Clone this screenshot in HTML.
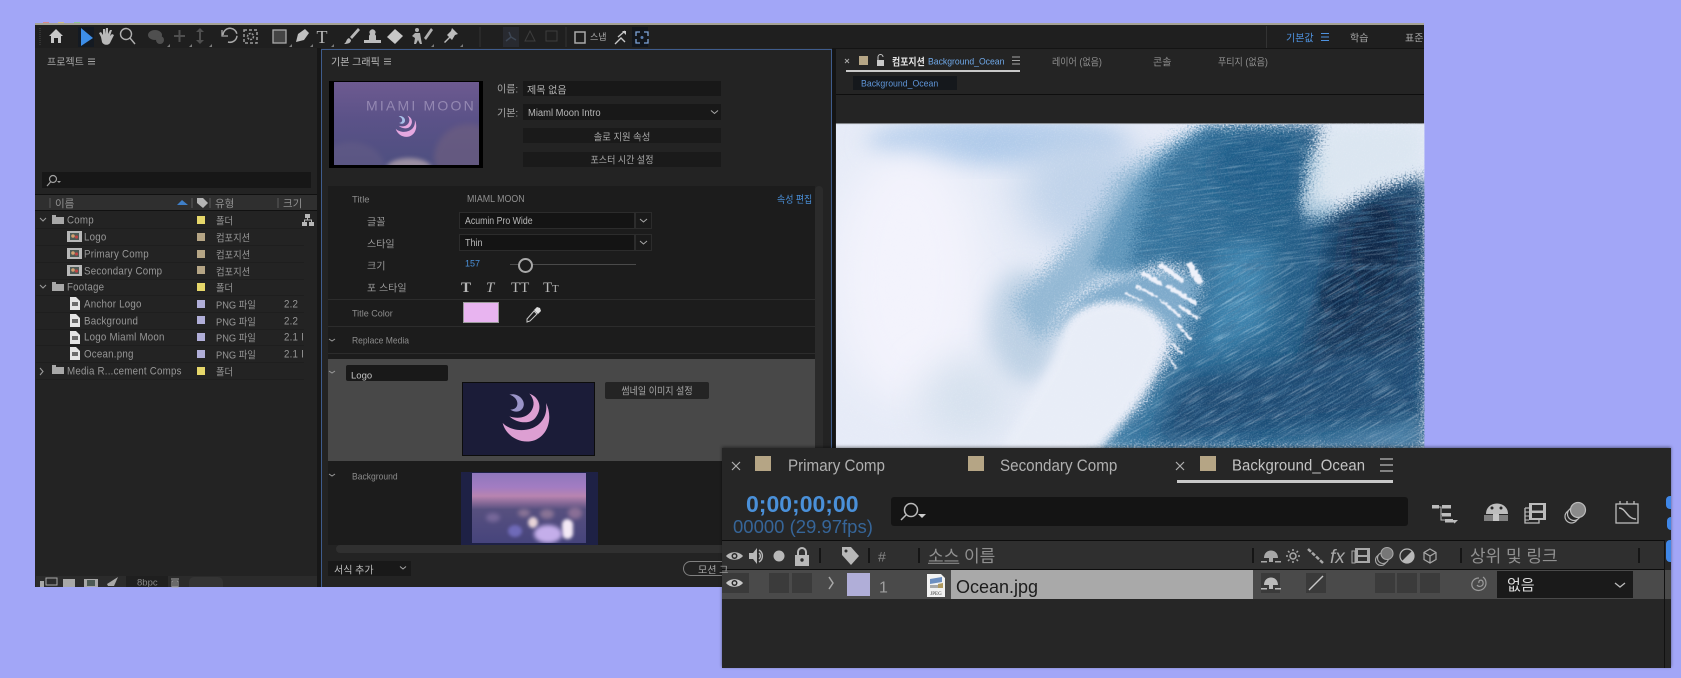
<!DOCTYPE html>
<html lang="ko"><head><meta charset="utf-8"><title>After Effects</title>
<style>
html,body{margin:0;padding:0;width:1681px;height:678px;overflow:hidden;background:#a2a6f7}
body{position:relative;font-family:"Liberation Sans","Noto Sans CJK KR",sans-serif;color:#9c9c9c}
.b{position:absolute;display:block}
.t{position:absolute;white-space:nowrap;transform:translateY(calc(-50% + var(--d,1px))) scaleX(var(--s,1));transform-origin:0 50%;font-style:normal;font-size:10px;line-height:1.2}
.k{--d:2.5px;font-size:10px;color:#a8a8a8}
.r{--s:.885;font-size:11px;letter-spacing:.25px;color:#979797}
.g{--d:2.5px;font-size:10px;color:#a8a8a8}
.y{--d:2.5px;--s:.93;font-size:10px;color:#979797}
.c{transform:translate(-50%,calc(-50% + 2.5px)) scaleX(var(--s,1));transform-origin:50% 50%}
.big{font-size:16.5px;color:#b0b0b0;--s:.92}
</style></head><body>

<!-- main window -->
<div class="b" style="left:35px;top:23px;width:1389px;height:564px;background:#232323"></div>
<div class="b" style="left:35px;top:23px;width:1389px;height:2px;background:#a5a294"></div>
<div class="b" style="left:35px;top:25px;width:1389px;height:23px;background:#1f1f1f"></div>
<div class="b" style="left:43px;top:22px;width:6px;height:1px;background:#d88a8a"></div>
<div class="b" style="left:58px;top:22px;width:6px;height:1px;background:#cfc08a"></div>
<div class="b" style="left:74px;top:22px;width:6px;height:1px;background:#8fc79a"></div>
<div class="b" style="left:78px;top:27px;width:16px;height:20px;background:#141a22"></div>
<div class="b" style="left:632px;top:27px;width:16px;height:20px;background:#12161c"></div>
<div class="b" style="left:503px;top:27px;width:16px;height:20px;background:#282a30"></div>

<!-- project panel -->
<div class="b" style="left:35px;top:48px;width:282px;height:539px;background:#232323"></div>
<div class="b" style="left:317px;top:48px;width:4px;height:539px;background:#171717"></div>
<div class="b" style="left:42px;top:172px;width:269px;height:16px;background:#171717"></div>
<div class="b" style="left:35px;top:194px;width:282px;height:17px;background:#2f2f2f;border-top:1px solid #111;border-bottom:1px solid #111;box-sizing:border-box"></div>
<div class="b" style="left:36px;top:228px;width:268px;height:1px;background:#1e1e1e"></div>
<div class="b" style="left:36px;top:245px;width:268px;height:1px;background:#1e1e1e"></div>
<div class="b" style="left:36px;top:262px;width:268px;height:1px;background:#1e1e1e"></div>
<div class="b" style="left:36px;top:279px;width:268px;height:1px;background:#1e1e1e"></div>
<div class="b" style="left:36px;top:295px;width:268px;height:1px;background:#1e1e1e"></div>
<div class="b" style="left:36px;top:312px;width:268px;height:1px;background:#1e1e1e"></div>
<div class="b" style="left:36px;top:329px;width:268px;height:1px;background:#1e1e1e"></div>
<div class="b" style="left:36px;top:345px;width:268px;height:1px;background:#1e1e1e"></div>
<div class="b" style="left:36px;top:362px;width:268px;height:1px;background:#1e1e1e"></div>
<div class="b" style="left:36px;top:379px;width:268px;height:1px;background:#1e1e1e"></div>
<div class="b" style="left:36px;top:576px;width:281px;height:11px;background:#2b2b2b"></div>
<div class="b" style="left:126px;top:576px;width:42px;height:11px;background:#1f1f1f"></div>
<div class="b" style="left:189px;top:577px;width:34px;height:10px;background:#343434;border-radius:5px 5px 0 0"></div>

<!-- essential graphics panel -->
<div class="b" style="left:321px;top:49px;width:511px;height:538px;background:#232323;border:1px solid #3f5c8c;border-bottom:0;box-sizing:border-box"></div>
<div class="b" style="left:329px;top:81px;width:154px;height:87px;background:#000"></div>
<div class="b" style="left:334px;top:82px;width:145px;height:83px;overflow:hidden;background:linear-gradient(180deg,#6d5a90 0%,#5b5288 45%,#4e4f80 100%)">
<span class="b" style="left:-18px;top:60px;width:70px;height:60px;border-radius:50%;background:#6d6288;opacity:.4;filter:blur(3px)"></span>
<span class="b" style="left:100px;top:42px;width:70px;height:70px;border-radius:50%;background:#6f5f80;opacity:.65;filter:blur(3px)"></span>
<span class="b" style="left:52px;top:76px;width:46px;height:22px;border-radius:50%;background:#9b8fa2;filter:blur(2px)"></span>
<span class="t" style="left:32px;top:24px;font-size:14px;color:#9488b2;letter-spacing:2.2px;--d:0px">MIAMI MOON</span>
<svg class="b" style="left:61px;top:33px" width="22" height="23" viewBox="0 0 150 150"><path fill="#e6a8e0" d="M135 30C155 70 145 125 100 142C60 155 15 130 5 90C25 110 60 118 95 105C125 92 140 65 135 30Z"/><path fill="#e6a8e0" d="M85 2C115 12 125 45 105 72C90 95 50 92 25 70C50 78 75 75 90 55C102 38 100 18 85 2Z"/><path fill="#a8c0e8" d="M25 5C50-2 72 20 68 38C65 55 45 62 28 50C45 50 52 38 48 25C45 15 35 8 25 5Z"/></svg>
</div>
<div class="b" style="left:523px;top:81px;width:198px;height:15px;background:#181818"></div>
<div class="b" style="left:523px;top:104px;width:198px;height:16px;background:#181818"></div>
<div class="b" style="left:523px;top:128px;width:198px;height:15px;background:#1a1a1a"></div>
<div class="b" style="left:523px;top:152px;width:198px;height:15px;background:#1a1a1a"></div>

<div class="b" style="left:328px;top:186px;width:487px;height:359px;background:#1c1c1c"></div>
<div class="b" style="left:815px;top:186px;width:8px;height:359px;background:#2b2b2b;border-radius:4px"></div>
<div class="b" style="left:328px;top:299px;width:487px;height:1px;background:#2c2c2c"></div>
<div class="b" style="left:328px;top:326px;width:487px;height:1px;background:#2c2c2c"></div>
<div class="b" style="left:328px;top:353px;width:487px;height:1px;background:#2c2c2c"></div>
<div class="b" style="left:459px;top:212px;width:176px;height:17px;background:#141414;border:1px solid #2c2c2c;box-sizing:border-box"></div>
<div class="b" style="left:635px;top:212px;width:17px;height:17px;background:#1a1a1a;border:1px solid #2c2c2c;box-sizing:border-box"></div>
<div class="b" style="left:459px;top:234px;width:176px;height:17px;background:#141414;border:1px solid #2c2c2c;box-sizing:border-box"></div>
<div class="b" style="left:635px;top:234px;width:17px;height:17px;background:#1a1a1a;border:1px solid #2c2c2c;box-sizing:border-box"></div>
<div class="b" style="left:510px;top:264px;width:126px;height:1px;background:#4a4a4a"></div>
<div class="b" style="left:518px;top:258px;width:11px;height:11px;border:2px solid #a8a8a8;border-radius:50%;background:#1c1c1c"></div>
<div class="b" style="left:463px;top:302px;width:36px;height:21px;background:#e8b4f0;border:1px solid #9a9a9a;box-sizing:border-box"></div>

<div class="b" style="left:328px;top:359px;width:487px;height:102px;background:#484848"></div>
<div class="b" style="left:346px;top:365px;width:102px;height:16px;background:#191919;border-radius:2px"></div>
<div class="b" style="left:462px;top:382px;width:133px;height:74px;background:#1b1c38;border:1px solid #0c0c0c;box-sizing:border-box"></div>
<svg class="b" style="left:501px;top:393px" width="50" height="50" viewBox="0 0 150 150"><path fill="#dd9fd2" d="M135 30C155 70 145 125 100 142C60 155 15 130 5 90C25 110 60 118 95 105C125 92 140 65 135 30Z"/><path fill="#dd9fd2" d="M85 2C115 12 125 45 105 72C90 95 50 92 25 70C50 78 75 75 90 55C102 38 100 18 85 2Z"/><path fill="#9a94c8" d="M25 5C50-2 72 20 68 38C65 55 45 62 28 50C45 50 52 38 48 25C45 15 35 8 25 5Z"/></svg>
<div class="b" style="left:605px;top:382px;width:104px;height:17px;background:#242424;border-radius:2px"></div>

<div class="b" style="left:461px;top:472px;width:137px;height:73px;background:#1e2145"></div>
<div class="b" style="left:472px;top:473px;width:114px;height:70px;overflow:hidden;background:linear-gradient(180deg,#8f78bc 0%,#a27cc2 20%,#b884b0 33%,#57507f 52%,#46447c 100%)">
<span class="b" style="left:56px;top:44px;width:10px;height:11px;border-radius:50%;background:#e8d4d8;filter:blur(1.5px)"></span>
<span class="b" style="left:90px;top:46px;width:11px;height:20px;border-radius:6px;background:#f4eaf6;filter:blur(1.5px)"></span>
<span class="b" style="left:62px;top:52px;width:28px;height:18px;border-radius:50%;background:#c4aeea;filter:blur(2px)"></span>
<span class="b" style="left:36px;top:52px;width:14px;height:12px;border-radius:50%;background:#6f6ab8;filter:blur(1.5px)"></span>
<span class="b" style="left:14px;top:40px;width:14px;height:9px;border-radius:50%;background:#77689a;filter:blur(2px)"></span>
<span class="b" style="left:68px;top:36px;width:14px;height:10px;border-radius:50%;background:#8a7496;filter:blur(2px)"></span>
<span class="b" style="left:46px;top:36px;width:12px;height:8px;border-radius:50%;background:#8a7496;filter:blur(2px)"></span>
<span class="b" style="left:96px;top:34px;width:14px;height:12px;border-radius:50%;background:#8a6f96;filter:blur(2px)"></span>
</div>
<div class="b" style="left:336px;top:545px;width:490px;height:8px;background:#303030;border-radius:4px"></div>
<div class="b" style="left:328px;top:561px;width:83px;height:15px;background:#191919"></div>
<div class="b" style="left:683px;top:561px;width:60px;height:15px;border:1px solid #808080;border-radius:8px;box-sizing:border-box"></div>

<!-- composition panel -->
<div class="b" style="left:836px;top:48px;width:588px;height:75px;background:#242424"></div>
<div class="b" style="left:832px;top:48px;width:4px;height:539px;background:#141414"></div>
<div class="b" style="left:853px;top:76px;width:104px;height:14px;background:#15181c"></div>
<div class="b" style="left:846px;top:70px;width:174px;height:1.5px;background:#c9c9c9"></div>
<div class="b" style="left:836px;top:94px;width:588px;height:1px;background:#0e0e0e"></div>
<div class="b" style="left:1266px;top:26px;width:1px;height:22px;background:#333"></div>
<div class="b" style="left:836px;top:48px;width:588px;height:1px;background:#141414"></div>

<!-- wave image -->
<svg class="b" style="left:830px;top:10px" width="610" height="440" viewBox="0 0 1568 1320" preserveAspectRatio="none">
<defs>
<clipPath id="cw"><rect x="15" y="340" width="1513" height="980"/></clipPath>
<filter id="bl12" x="-20%" y="-20%" width="140%" height="140%"><feGaussianBlur stdDeviation="12"/></filter>
<filter id="bl30" x="-30%" y="-30%" width="160%" height="160%"><feGaussianBlur stdDeviation="30"/></filter>
<filter id="bl60" x="-40%" y="-40%" width="180%" height="180%"><feGaussianBlur stdDeviation="55"/></filter>
<filter id="sc" x="-10%" y="-10%" width="120%" height="120%"><feGaussianBlur stdDeviation="12" result="s"/><feTurbulence type="fractalNoise" baseFrequency=".2" numOctaves="2" seed="7"/><feDisplacementMap in="s" scale="60" xChannelSelector="R" yChannelSelector="G"/></filter>
<filter id="sc3" x="-10%" y="-10%" width="120%" height="120%"><feGaussianBlur stdDeviation="18" result="s"/><feTurbulence type="fractalNoise" baseFrequency=".22" numOctaves="2" seed="15"/><feDisplacementMap in="s" scale="85" xChannelSelector="R" yChannelSelector="G"/></filter>
<filter id="sc2" x="-10%" y="-10%" width="120%" height="120%"><feTurbulence type="fractalNoise" baseFrequency=".12" numOctaves="2" seed="9"/><feDisplacementMap in="SourceGraphic" scale="14" xChannelSelector="R" yChannelSelector="G"/><feGaussianBlur stdDeviation="1.2"/></filter>
<filter id="sw" x="0" y="0" width="100%" height="100%"><feTurbulence type="fractalNoise" baseFrequency=".012 .2" numOctaves="3" seed="4"/><feColorMatrix values="0 0 0 0 .82  0 0 0 0 .92  0 0 0 0 1  3.2 0 0 0 -1.7"/></filter>
<filter id="sd" x="0" y="0" width="100%" height="100%"><feTurbulence type="fractalNoise" baseFrequency=".014 .17" numOctaves="3" seed="11"/><feColorMatrix values="0 0 0 0 .05  0 0 0 0 .17  0 0 0 0 .32  3.2 0 0 0 -1.5"/></filter>
<filter id="sp" x="0" y="0" width="100%" height="100%"><feTurbulence type="fractalNoise" baseFrequency=".33" numOctaves="2" seed="3"/><feColorMatrix values="0 0 0 0 .93  0 0 0 0 .95  0 0 0 0 1  3.5 0 0 0 -1.75"/></filter>
<pattern id="pw1" patternUnits="userSpaceOnUse" width="1500" height="1500" patternTransform="rotate(-34)"><rect width="1500" height="1500" filter="url(#sw)"/></pattern>
<pattern id="pd1" patternUnits="userSpaceOnUse" width="1500" height="1500" patternTransform="rotate(-34)"><rect width="1500" height="1500" filter="url(#sd)"/></pattern>
<pattern id="pw2" patternUnits="userSpaceOnUse" width="1500" height="1500" patternTransform="rotate(-9)"><rect width="1500" height="1500" filter="url(#sw)"/></pattern>
<pattern id="pd2" patternUnits="userSpaceOnUse" width="1500" height="1500" patternTransform="rotate(-9)"><rect width="1500" height="1500" filter="url(#sd)"/></pattern>
<linearGradient id="gb" x1="0" y1="0" x2="1" y2="0"><stop offset="0" stop-color="#3f80aa"/><stop offset=".45" stop-color="#26648f"/><stop offset="1" stop-color="#174a73"/></linearGradient>
<mask id="mb" maskUnits="userSpaceOnUse" x="0" y="0" width="1568" height="1320"><path d="M990 345L1265 345L1240 470L1215 600L1300 610L1400 540L1528 500L1528 1320L660 1320L790 1190L860 1060L930 930L960 800L860 760L770 780L790 650L830 500L880 430Z" fill="#fff" filter="url(#sc3)"/></mask>
</defs>
<g clip-path="url(#cw)">
<rect x="15" y="340" width="1513" height="980" fill="#e6ebf7"/>
<ellipse cx="430" cy="395" rx="330" ry="70" fill="#b0cbea" filter="url(#bl30)"/>
<ellipse cx="660" cy="540" rx="170" ry="170" fill="#c0d3ea" filter="url(#bl60)"/>
<ellipse cx="200" cy="800" rx="190" ry="380" fill="#f3f3fc" filter="url(#bl60)"/>
<ellipse cx="500" cy="950" rx="90" ry="170" fill="#bcd0e4" filter="url(#bl30)"/>
<ellipse cx="350" cy="1170" rx="110" ry="120" fill="#d6e1ee" filter="url(#bl60)"/>
<path d="M960 345L840 420L740 500L690 600L620 700L540 800L470 880L540 1000L600 900L680 820L800 780L900 600L1000 400Z" fill="#93b8d4" filter="url(#sc3)"/>
<path d="M980 345L860 440L780 520L720 640L670 770L760 790L860 720L950 600L1020 400Z" fill="#6499bd" filter="url(#sc)"/>
<path d="M585 950C640 830 760 770 960 790L960 940L885 1010C870 930 800 880 720 880C660 880 610 930 590 985Z" fill="#7eaacb" filter="url(#sc)"/>
<path d="M990 345L1265 345L1240 470L1215 600L1300 610L1400 540L1528 500L1528 1320L660 1320L790 1190L860 1060L930 930L960 800L860 760L770 780L790 650L830 500L880 430Z" fill="url(#gb)" filter="url(#sc3)"/>
<g mask="url(#mb)">
<path d="M1290 620L1430 540L1528 540L1528 1080L1330 1060L1200 1120L1270 820Z" fill="#123658" filter="url(#bl30)"/>
<ellipse cx="1400" cy="720" rx="60" ry="140" fill="#0c2846" filter="url(#bl12)"/>
<ellipse cx="1310" cy="860" rx="50" ry="70" fill="#0d2c4e" filter="url(#bl12)"/>
<ellipse cx="1100" cy="480" rx="110" ry="90" fill="#1f5c88" filter="url(#bl30)"/>
<path d="M900 1110L1528 1000L1528 1200L830 1300Z" fill="#1c4a72" filter="url(#bl30)"/>
<path d="M1120 1320L1528 1230L1528 1320Z" fill="#5b90b5" filter="url(#bl30)"/>
<path d="M1000 700L1130 700L1130 960L960 1040Z" fill="#3f86b0" filter="url(#bl30)"/>
<rect x="15" y="340" width="1513" height="440" fill="url(#pw2)" opacity=".3"/>
<rect x="15" y="340" width="1513" height="440" fill="url(#pd2)" opacity=".6"/>
<rect x="15" y="760" width="1513" height="560" fill="url(#pw1)" opacity=".4"/>
<rect x="15" y="760" width="1513" height="560" fill="url(#pd1)" opacity=".65"/>
</g>
<path d="M1235 430L1300 430L1290 620L1215 630Z" fill="#9dbfd6" filter="url(#sc3)"/>
<path d="M1270 345L1528 345L1528 470L1430 515L1340 560L1235 590L1255 430Z" fill="#dbe6f1" filter="url(#sc3)"/>
<path d="M595 985C600 910 680 870 760 880C840 890 870 960 850 1040C825 1120 770 1220 690 1320L440 1320C480 1220 570 1090 595 985Z" fill="#e8edf7" filter="url(#bl12)"/>
<g fill="none" stroke="#eef1fa" stroke-linecap="round" filter="url(#sc2)">
<path d="M805 790L850 822" stroke-width="12"/><path d="M850 765L905 812" stroke-width="13"/><path d="M925 765L950 815" stroke-width="18"/>
<path d="M870 830L940 880" stroke-width="12"/><path d="M790 830L840 860" stroke-width="8"/><path d="M900 890L945 925" stroke-width="9"/><path d="M850 870L900 920" stroke-width="6"/><path d="M895 945L925 985" stroke-width="7"/><path d="M880 1000L905 1030" stroke-width="5"/><path d="M760 850L800 870" stroke-width="6"/><path d="M870 1040L890 1075" stroke-width="5"/>
</g>
<rect x="15" y="340" width="1513" height="980" filter="url(#sp)" opacity=".2"/>
<rect x="15" y="340" width="1513" height="3" fill="#cfd4dc"/>
</g>
</svg>

<!-- timeline -->
<div class="b" style="left:722px;top:448px;width:949px;height:220px;background:#262626;box-shadow:0 -1px 3px rgba(0,0,0,.45)"></div>
<div class="b" style="left:755px;top:456px;width:16px;height:15px;background:#b5a585"></div>
<div class="b" style="left:968px;top:456px;width:16px;height:15px;background:#b5a585"></div>
<div class="b" style="left:1200px;top:456px;width:16px;height:15px;background:#b5a585"></div>
<div class="b" style="left:1177px;top:480px;width:216px;height:3px;background:#c9c9c9"></div>
<div class="b" style="left:891px;top:497px;width:517px;height:29px;background:#141414;border-radius:3px"></div>
<div class="b" style="left:722px;top:540px;width:942px;height:30px;background:#2f2f2f;border-top:1px solid #0d0d0d;border-bottom:1px solid #0d0d0d;box-sizing:border-box"></div>
<div class="b" style="left:722px;top:570px;width:942px;height:29px;background:#4a4a4a"></div>
<div class="b" style="left:1665px;top:570px;width:6px;height:29px;background:#4a4a4a"></div>
<div class="b" style="left:1664px;top:540px;width:1px;height:128px;background:#111"></div>
<div class="b" style="left:722px;top:573px;width:27px;height:20px;background:#3a3a3a"></div>
<div class="b" style="left:769px;top:573px;width:20px;height:20px;background:#3b3b3b"></div>
<div class="b" style="left:792px;top:573px;width:20px;height:20px;background:#3b3b3b"></div>
<div class="b" style="left:847px;top:573px;width:23px;height:23px;background:#b0aed8"></div>
<div class="b" style="left:951px;top:570px;width:302px;height:29px;background:#a9a9a9"></div>
<div class="b" style="left:1261px;top:573px;width:19px;height:20px;background:#3a3a3a"></div>
<div class="b" style="left:1306px;top:573px;width:20px;height:20px;background:#3a3a3a"></div>
<div class="b" style="left:1375px;top:573px;width:20px;height:20px;background:#3b3b3b"></div>
<div class="b" style="left:1397px;top:573px;width:20px;height:20px;background:#3b3b3b"></div>
<div class="b" style="left:1420px;top:573px;width:20px;height:20px;background:#3b3b3b"></div>
<div class="b" style="left:1497px;top:571px;width:136px;height:27px;background:#1a1a1a"></div>
<div class="b" style="left:1666px;top:496px;width:5px;height:13px;background:#3f87e8;border-radius:4px 0 0 4px"></div>
<div class="b" style="left:1667px;top:517px;width:4px;height:13px;background:#3f87e8;border-radius:4px 0 0 4px"></div>
<div class="b" style="left:1666px;top:540px;width:5px;height:22px;background:#3f87e8;border-radius:4px 0 0 4px"></div>

<!-- icon overlay -->
<svg class="b" style="left:0;top:0" width="1681" height="678" viewBox="0 0 1681 678" fill="none">
<!-- toolbar -->
<g stroke="#333"><path d="M40 28V46" stroke-dasharray="1 1" stroke-width="2"/><path d="M480 27V47M566 27V47"/></g>
<path fill="#c8c8c8" d="M49 36L56 29L63 36H61V43H58V38H54V43H51V36Z"/>
<path fill="#3d8ee8" d="M81 28L93 38L81 46Z"/>
<path fill="#b8b8b8" d="M101 37L99 33L101 32L103 35L103 29H105V34L106 28H108V34L110 30H112L110 36L112 34L114 35L110 43C108 46 103 45 102 42Z"/>
<g stroke="#b0b0b0" stroke-width="1.4"><circle cx="126" cy="34" r="5.5"/><path d="M130 38L135 44"/></g>
<g fill="#4f4f4f"><ellipse cx="155" cy="35" rx="7" ry="5"/><circle cx="160" cy="40" r="4"/><rect x="174" y="35" width="11" height="2"/><rect x="178.500" y="30" width="2" height="12"/><rect x="199" y="29" width="2" height="14"/><path d="M196 32L200 28L204 32ZM196 40L204 40L200 44Z"/></g>
<g stroke="#a8a8a8" stroke-width="1.5"><path d="M223 35A7 7 0 1 1 228 42" stroke-dasharray="20 2"/><path d="M222 30V36H228" stroke-width="1.3"/></g>
<g stroke="#9c9c9c" stroke-width="1.5"><rect x="244" y="30" width="13" height="13" stroke-dasharray="3 2"/><circle cx="250.500" cy="36.500" r="3" stroke-dasharray="2 1"/></g>
<rect x="273" y="30" width="13" height="13" fill="#444" stroke="#aaa" stroke-width="1.3"/>
<path fill="#c0c0c0" d="M296 42L298 34L305 29L309 33L304 40Z"/>
<text x="322" y="43" text-anchor="middle" font-family="Liberation Serif" font-size="18" fill="#b8b8b8">T</text>
<path fill="#b8b8b8" d="M358 28L350 37L352 39L360 30ZM349 38C346 39 347 42 344 44C348 44 351 43 351 40Z"/>
<path fill="#bcbcbc" d="M369 40L369 36C369 35 370 35 370 34A3 3 0 1 1 375 34C375 35 376 35 376 36V40H381V43H364V40Z"/>
<path fill="#c8c8c8" d="M395 29L403 36L395 44L387 37Z"/>
<g fill="#b0b0b0"><circle cx="417" cy="30" r="2"/><path d="M415 33H420L421 39L422 44H420L418 40L416 44H414L415 38L412 36Z"/><path d="M431 28L424 38L426 40L433 30Z"/></g>
<path fill="#bdbdbd" d="M452 28L458 34L455 35L452 40L450 38L445 43L444 42L449 37L447 35L451 31Z"/>
<path d="M509 32L511 37L516 40M511 37L506 41" stroke="#3d4654" stroke-width="1.5"/>
<path d="M530 31L535 41H525Z" stroke="#3d3d3d"/>
<rect x="546" y="31" width="11" height="10" stroke="#3d3d3d"/>
<rect x="575" y="32" width="10" height="11" stroke="#aaa" stroke-width="1.5"/>
<path d="M615 44L621 38L625 42M618 37L625 31" stroke="#c8c8c8" stroke-width="1.4"/><path d="M622 31H626V35Z" fill="#c8c8c8"/>
<g stroke="#7da4d8" stroke-width="1.3"><path d="M636 36V32H640M644 32H648V36M648 39V43H644M640 43H636V39"/></g>
<circle cx="642" cy="37.500" r="1.500" fill="#5a7eb0"/>
<!-- menus -->
<g stroke="#a6a6a6"><path d="M88 59H95M88 61.500H95M88 64H95"/><path d="M384 59H391M384 61.500H391M384 64H391"/><path d="M1012 57H1020M1012 60.500H1020M1012 64H1020"/></g>
<path d="M1321 33.500H1329M1321 37H1329M1321 40.500H1329" stroke="#4f93e0"/>
<path d="M1380 459H1393M1380 465H1393M1380 471H1393" stroke="#bbb" stroke-width="1.300"/>
<!-- close -->
<g stroke="#a8a8a8"><path d="M845 59L849 63M849 59L845 63"/></g>
<g stroke="#b0b0b0" stroke-width="1.2"><path d="M732 462L740 470M740 462L732 470"/><path d="M1176 462L1184 470M1184 462L1176 470"/></g>
<rect x="859" y="56" width="9" height="9" fill="#b5a585"/>
<path fill="#c8c8c8" d="M877 60H884V66H877Z"/><path d="M878 60V57A2.500 2.500 0 0 1 883 57" stroke="#c8c8c8"/>
<!-- project search -->
<g stroke="#a0a0a0" stroke-width="1.2"><circle cx="53" cy="179" r="3.500"/><path d="M50.500 182L47 186"/></g><path d="M57 181H61L59 183Z" fill="#a0a0a0"/>
<!-- project header -->
<g stroke="#5b5b5b"><path d="M50 198V208M192 198V208M210 198V208M278 198V208"/></g>
<path fill="#3f7fc8" d="M177 205L182 200L188 205Z"/>
<path fill="#b5b5b5" d="M197 198H203L208 203L203 208L197 203Z"/>
<!-- tree -->
<path fill="#b8b8b8" d="M305 214H310V218H305ZM302 222H307V226H302ZM309 222H314V226H309Z"/><path d="M307.500 218V220H304.500V222M307.500 220H311.500V222" stroke="#b8b8b8"/>
<!-- chevrons -->
<g stroke="#9a9a9a" stroke-width="1.1"><path d="M40 218L43 221L46 218"/><path d="M40 285L43 288L46 285"/><path d="M40 368L43 371.500L40 375"/></g>
<!-- folders -->
<g fill="#a8a8a8"><path d="M52 217H64V224H52ZM52 215H56V217H52Z"/><path d="M52 284H64V291H52ZM52 282H56V284H52Z"/><path d="M52 367H64V374H52ZM52 365H56V367H52Z"/></g>
<!-- swatches -->
<g fill="#e6d76a"><rect x="197" y="216" width="8" height="8"/><rect x="197" y="283" width="8" height="8"/><rect x="197" y="367" width="8" height="8"/></g>
<g fill="#b5a585"><rect x="197" y="233" width="8" height="8"/><rect x="197" y="250" width="8" height="8"/><rect x="197" y="266" width="8" height="8"/></g>
<g fill="#b0aed8"><rect x="197" y="300" width="8" height="8"/><rect x="197" y="316" width="8" height="8"/><rect x="197" y="333" width="8" height="8"/><rect x="197" y="350" width="8" height="8"/></g>
<!-- comp icons -->
<g><rect x="67" y="231" width="15" height="11" fill="#b8b8b8"/><rect x="70" y="233" width="9" height="7" fill="#4d5a55"/><circle cx="73" cy="236" r="1.800" fill="#d0a070"/><circle cx="76.500" cy="237" r="1.600" fill="#b44"/></g>
<g><rect x="67" y="248" width="15" height="11" fill="#b8b8b8"/><rect x="70" y="250" width="9" height="7" fill="#4d5a55"/><circle cx="73" cy="253" r="1.800" fill="#d0a070"/><circle cx="76.500" cy="254" r="1.600" fill="#b44"/></g>
<g><rect x="67" y="265" width="15" height="11" fill="#b8b8b8"/><rect x="70" y="267" width="9" height="7" fill="#4d5a55"/><circle cx="73" cy="270" r="1.800" fill="#d0a070"/><circle cx="76.500" cy="271" r="1.600" fill="#b44"/></g>
<!-- file icons -->
<g fill="#e4e4e4"><path d="M70 297H76L80 301V310H70Z"/><path d="M70 314H76L80 318V327H70Z"/><path d="M70 331H76L80 335V344H70Z"/><path d="M70 347H76L80 351V360H70Z"/></g>
<g fill="#6a6a6a"><rect x="72" y="302" width="6" height="4"/><rect x="72" y="319" width="6" height="4"/><rect x="72" y="336" width="6" height="4"/><rect x="72" y="352" width="6" height="4"/></g>
<!-- bottom project -->
<g fill="#a8a8a8"><rect x="46" y="578" width="11" height="7" stroke="#a8a8a8" fill="#2b2b2b"/><rect x="40" y="581" width="4" height="6"/><path d="M63 579H75V587H63Z"/><rect x="84" y="579" width="14" height="8"/><path d="M107 584L118 577L114 586H108Z"/></g>
<rect x="87" y="580" width="8" height="6" fill="#4d5a55"/>
<path d="M171 579H179M172 581H178V587H172ZM174 582V587M176 582V587" stroke="#aaa"/>
<!-- graphics chevrons -->
<g stroke="#a8a8a8"><path d="M711 110.500L714.500 113.500L718 110.500"/><path d="M640 219L643.500 222L647 219"/><path d="M640 241L643.500 244L647 241"/><path d="M400 566.500L403 569L406 566.500"/></g>
<g stroke="#9a9a9a"><path d="M329 339L332 341L335 339"/><path d="M329 371L332 373L335 371"/><path d="M329 474L332 476L335 474"/></g>
<!-- eyedropper -->
<path d="M527 319L534 311L537 314L530 321L527 322Z" stroke="#c8c8c8"/><path fill="#ddd" d="M534 310L537 307L540 308L541 311L538 314Z"/>
<!-- style T -->
<g font-family="Liberation Serif" fill="#b8b8b8"><text x="461" y="292" font-size="15" font-weight="bold">T</text><text x="486" y="292" font-size="15" font-style="italic">T</text><text x="511" y="292" font-size="15">TT</text><text x="543" y="292" font-size="15">T</text><text x="552" y="292" font-size="11">T</text></g>
<!-- timeline search icon -->
<g stroke="#bbb" stroke-width="1.500"><circle cx="911" cy="510" r="6.500"/><path d="M906 515L901 520"/></g>
<path d="M918 514H926L922 518Z" fill="#ccc"/>
<!-- eye icons -->
<path d="M726 556C730 551 739 551 743 556C739 561 730 561 726 556Z" fill="#b8b8b8"/><circle cx="734.500" cy="556" r="3" fill="#2a2a2a"/><circle cx="734.500" cy="556" r="1.500" fill="#b8b8b8"/>
<path d="M726 583C730 578 739 578 743 583C739 588 730 588 726 583Z" fill="#c8c8c8"/><circle cx="734.500" cy="583" r="3" fill="#2a2a2a"/><circle cx="734.500" cy="583" r="1.500" fill="#c8c8c8"/>
<path fill="#b8b8b8" d="M749 553H753L757 548V564L753 559H749Z"/><path d="M759 550A7 7 0 0 1 759 562M759 553A4 4 0 0 1 759 559" stroke="#b8b8b8" stroke-width="1.400"/>
<circle cx="779" cy="556" r="5.500" fill="#b8b8b8"/>
<path fill="#b8b8b8" d="M795 555H809V566H795Z"/><path d="M798 555V552A4 4 0 0 1 806 552V555" stroke="#b8b8b8" stroke-width="2"/><circle cx="802" cy="560" r="1.700" fill="#2a2a2a"/>
<g stroke="#0d0d0d" stroke-width="1.500"><path d="M820 548V563M869 548V563M919 548V563M1253 548V563M1461 548V563M1639 548V563"/></g>
<path fill="#b8b8b8" d="M842 547H851L859 556L851 565L842 555Z"/><circle cx="846" cy="551" r="1.500" fill="#2f2f2f"/>
<path d="M829 577L833 583L829 589" stroke="#a8a8a8" stroke-width="1.500"/>
<!-- jpeg file -->
<path fill="#f2f2f2" d="M927 574H941L945 578V597H927Z"/><path fill="#6d8fc0" d="M930 579L942 577V582L930 584Z"/><path fill="#b09a60" d="M938 584L943 583V588H938Z"/><path fill="#777" d="M930 585H938V588H930Z" opacity=".6"/>
<text x="936" y="595" text-anchor="middle" font-family="Liberation Serif" font-size="5" fill="#333">JPEG</text>
<!-- col icons -->
<g fill="#a8a8a8">
<path d="M1264 558C1264 548 1278 548 1278 558H1273V562H1269V558ZM1261 561H1267V562.500H1261ZM1275 561H1281V562.500H1275Z"/>
<path d="M1264 585C1264 575 1278 575 1278 585H1273V589H1269V585ZM1261 588H1267V589.500H1261ZM1275 588H1281V589.500H1275Z" fill="#bbb"/>
</g>
<g stroke="#a8a8a8" stroke-width="1.500"><circle cx="1293" cy="556" r="3"/><path d="M1293 549V551M1293 561V563M1286 556H1288M1298 556H1300M1288 551L1289.500 552.500M1296.500 559.500L1298 561M1298 551L1296.500 552.500M1289.500 559.500L1288 561"/></g>
<path d="M1308 549L1323 563" stroke="#a8a8a8" stroke-width="2.500" stroke-dasharray="4 1.500"/>
<text x="1330" y="563" font-family="Liberation Sans" font-style="italic" font-size="19" fill="#a8a8a8">fx</text>
<rect x="1355" y="548" width="15" height="15" fill="#a8a8a8"/><rect x="1358" y="550" width="9" height="5" fill="#2f2f2f"/><rect x="1358" y="557" width="9" height="4" fill="#2f2f2f"/><rect x="1352" y="551" width="3" height="12" stroke="#a8a8a8"/>
<g stroke="#a8a8a8" stroke-width="1.100"><circle cx="1381" cy="560" r="5.500" fill="#2f2f2f"/><circle cx="1383" cy="558" r="5.500" fill="#2f2f2f"/><circle cx="1387" cy="553.500" r="6" fill="#777"/></g>
<circle cx="1407" cy="556" r="7" stroke="#b8b8b8" stroke-width="1.200"/><path fill="#b8b8b8" d="M1412 551A7 7 0 0 1 1402 561Z"/>
<path d="M1430 549L1436 552.500V559.500L1430 563L1424 559.500V552.500ZM1424 552.500L1430 556L1436 552.500M1430 556V563" stroke="#a8a8a8" stroke-width="1.200"/>
<path d="M1309 590L1323 576" stroke="#c8c8c8" stroke-width="1.400"/>
<path d="M1479 578C1474 578 1471 582 1472 586C1473 590 1479 592 1483 589C1487 586 1487 580 1483 577M1479 583C1478 580 1482 579 1483 582C1484 586 1479 588 1477 585" stroke="#9a9a9a" stroke-width="1.200"/>
<path d="M1615 583L1620 587L1625 583" stroke="#bbb" stroke-width="1.300"/>
<!-- top right timeline icons -->
<g fill="#bcbcbc"><rect x="1432" y="505" width="7" height="3.500"/><rect x="1442" y="505" width="9" height="3.500"/><rect x="1442" y="513" width="9" height="3.500"/><rect x="1445" y="519" width="8" height="3.500"/></g>
<path d="M1439 507H1441V520H1445M1441 514H1443" stroke="#bcbcbc"/>
<path d="M1451 520H1458L1454.500 523.500Z" fill="#bbb"/>
<path fill="#bdbdbd" d="M1486 514C1486 500 1508 500 1508 514H1499V520H1493V514Z"/><circle cx="1492" cy="508" r="1.500" fill="#262626"/><circle cx="1501" cy="508" r="1.500" fill="#262626"/><rect x="1484" y="515" width="9" height="6" fill="#7f7f7f"/><rect x="1499" y="515" width="9" height="6" fill="#7f7f7f"/><rect x="1493" y="514" width="6" height="7" fill="#c4c4c4"/>
<rect x="1529" y="503" width="17" height="17" fill="#bcbcbc"/><rect x="1532" y="505" width="11" height="5.500" fill="#2a2a2a"/><rect x="1532" y="513" width="11" height="5" fill="#2a2a2a"/><path d="M1525 508H1529M1525 508V523H1539V520" stroke="#bcbcbc" stroke-width="1.300"/><path d="M1525 512H1529M1525 516H1529M1525 520H1529" stroke="#bcbcbc"/>
<g stroke="#bbb" stroke-width="1.200"><circle cx="1571.500" cy="516.500" r="6.500" fill="#262626"/><circle cx="1574" cy="514" r="6.500" fill="#262626"/><circle cx="1578" cy="510" r="7.500" fill="#8a8a8a"/></g>
<g stroke="#bcbcbc" stroke-width="1.300"><rect x="1616" y="504" width="22" height="19"/><path d="M1620 504V501M1627 504V501M1634 504V501"/><path d="M1619 508C1626 508 1627 519 1636 519" stroke-width="1.500"/></g>
<!-- small triangles -->
<g fill="#7b7b7b"><path d="M167 47L170 47V44Z"/><path d="M189 47L192 47V44Z"/><path d="M209 47L212 47V44Z"/><path d="M289 47L292 47V44Z"/><path d="M310 47L313 47V44Z"/><path d="M331 47L334 47V44Z"/><path d="M431 47L434 47V44Z"/><path d="M460 47L463 47V44Z"/></g>
</svg>

<!-- text -->
<i class="t k" style="left:47px;top:61px">프로젝트</i>
<i class="t k" style="left:55px;top:202px;color:#909090;font-size:10.5px">이름</i>
<i class="t k" style="left:215px;top:202px;color:#909090;font-size:10.5px">유형</i>
<i class="t k" style="left:283px;top:202px;color:#909090;font-size:10.5px">크기</i>
<i class="t r" style="left:67px;top:220px">Comp</i><i class="t y" style="left:216px;top:220px">폴더</i>
<i class="t r" style="left:84px;top:237px">Logo</i><i class="t y" style="left:216px;top:237px">컴포지션</i>
<i class="t r" style="left:84px;top:254px">Primary Comp</i><i class="t y" style="left:216px;top:254px">컴포지션</i>
<i class="t r" style="left:84px;top:271px">Secondary Comp</i><i class="t y" style="left:216px;top:271px">컴포지션</i>
<i class="t r" style="left:67px;top:287px">Footage</i><i class="t y" style="left:216px;top:287px">폴더</i>
<i class="t r" style="left:84px;top:304px">Anchor Logo</i><i class="t y" style="left:216px;top:304px">PNG 파일</i><i class="t r" style="left:284px;top:304px">2.2</i>
<i class="t r" style="left:84px;top:321px">Background</i><i class="t y" style="left:216px;top:321px">PNG 파일</i><i class="t r" style="left:284px;top:321px">2.2</i>
<i class="t r" style="left:84px;top:337px">Logo Miaml Moon</i><i class="t y" style="left:216px;top:337px">PNG 파일</i><i class="t r" style="left:284px;top:337px">2.1 I</i>
<i class="t r" style="left:84px;top:354px">Ocean.png</i><i class="t y" style="left:216px;top:354px">PNG 파일</i><i class="t r" style="left:284px;top:354px">2.1 I</i>
<i class="t r" style="left:67px;top:371px">Media R...cement Comps</i><i class="t y" style="left:216px;top:371px">폴더</i>
<i class="t" style="left:137px;top:582px;font-size:9.5px;color:#888">8bpc</i>

<i class="t k" style="left:331px;top:61px;color:#bbb">기본 그래픽</i>
<i class="t g" style="left:497px;top:88px">이름:</i>
<i class="t g" style="left:497px;top:112px">기본:</i>
<i class="t g" style="left:527px;top:89px;color:#b4b4b4">제목 없음</i>
<i class="t" style="left:528px;top:113px;color:#b8b8b8;font-size:10px;--s:.94">Miaml Moon Intro</i>
<i class="t g c" style="left:622px;top:136px;--s:.93">솔로 지원 속성</i>
<i class="t g c" style="left:622px;top:159px;--s:.9">포스터 시간 설정</i>
<i class="t" style="left:352px;top:199px;color:#8c8c8c;font-size:9.5px">Title</i>
<i class="t" style="left:467px;top:199px;color:#8f8f8f;font-size:10px;--s:.885">MIAML MOON</i>
<i class="t" style="left:777px;top:199px;color:#4a90d9;font-size:10px;--s:.89;--d:2px">속성 편집</i>
<i class="t g" style="left:367px;top:221px;color:#999">글꼴</i>
<i class="t g" style="left:367px;top:243px;color:#999">스타일</i>
<i class="t g" style="left:367px;top:265px;color:#999">크기</i>
<i class="t g" style="left:367px;top:287px;color:#999">포 스타일</i>
<i class="t" style="left:465px;top:221px;color:#b8b8b8;font-size:10px;--s:.875">Acumin Pro Wide</i>
<i class="t" style="left:465px;top:243px;color:#b8b8b8;font-size:10px;--s:.9">Thin</i>
<i class="t" style="left:465px;top:263px;color:#4a90d9;font-size:9px">157</i>
<i class="t" style="left:352px;top:313px;color:#8c8c8c;font-size:9.5px;--s:.95">Title Color</i>
<i class="t" style="left:352px;top:340px;color:#8c8c8c;font-size:9.5px;--s:.9">Replace Media</i>
<i class="t" style="left:351px;top:375px;color:#c4c4c4;font-size:9.5px">Logo</i>
<i class="t g c" style="left:657px;top:390px;color:#a8a8a8;--s:.9">썸네일 이미지 설정</i>
<i class="t" style="left:352px;top:476px;color:#8c8c8c;font-size:9.5px;--s:.9">Background</i>
<i class="t g" style="left:334px;top:569px;color:#bbb">서식 추가</i>
<i class="t g" style="left:698px;top:569px">모션 그</i>
<i class="t g" style="left:590px;top:35px;font-size:9px">스냅</i>

<i class="t g" style="left:892px;top:61px;color:#e4e4e4;font-weight:bold;--s:.89">컴포지션</i>
<i class="t" style="left:928px;top:61px;color:#6fa8e8;font-size:9.5px;--s:.91">Background_Ocean</i>
<i class="t g" style="left:1052px;top:61px;color:#8f8f8f;--s:.9">레이어 (없음)</i>
<i class="t g" style="left:1153px;top:61px;color:#8f8f8f">콘솔</i>
<i class="t g" style="left:1218px;top:61px;color:#8f8f8f;--s:.9">푸티지 (없음)</i>
<i class="t" style="left:861px;top:83px;color:#5f95d8;font-size:9.5px;--s:.92">Background_Ocean</i>
<i class="t g" style="left:1286px;top:37px;color:#4f93e0">기본값</i>
<i class="t g" style="left:1350px;top:37px;color:#a8a8a8">학습</i>
<i class="t g" style="left:1405px;top:37px;color:#a8a8a8">표준</i>

<i class="t big" style="left:788px;top:466px">Primary Comp</i>
<i class="t big" style="left:1000px;top:466px">Secondary Comp</i>
<i class="t big" style="left:1232px;top:466px;color:#c4c4c4;letter-spacing:.1px;font-size:15.5px;--s:.96">Background_Ocean</i>
<i class="t" style="left:746px;top:504px;font-size:23px;font-weight:bold;color:#4a90d9">0;00;00;00</i>
<i class="t" style="left:733px;top:526px;font-size:18.5px;color:#366598">00000 (29.97fps)</i>
<i class="t" style="left:878px;top:556px;font-size:14px;color:#888">#</i>
<i class="t" style="left:928px;top:556px;font-size:17px;color:#909090"><span style="text-decoration:underline">소스</span> 이름</i>
<i class="t" style="left:1470px;top:556px;font-size:17px;color:#909090">상위 및 링크</i>
<i class="t" style="left:879px;top:587px;font-size:16px;color:#9f9f9f">1</i>
<i class="t" style="left:956px;top:587px;font-size:18px;color:#1c1c1c">Ocean.jpg</i>
<i class="t" style="left:1507px;top:585px;font-size:15px;color:#dcdcdc">없음</i>
</body></html>
